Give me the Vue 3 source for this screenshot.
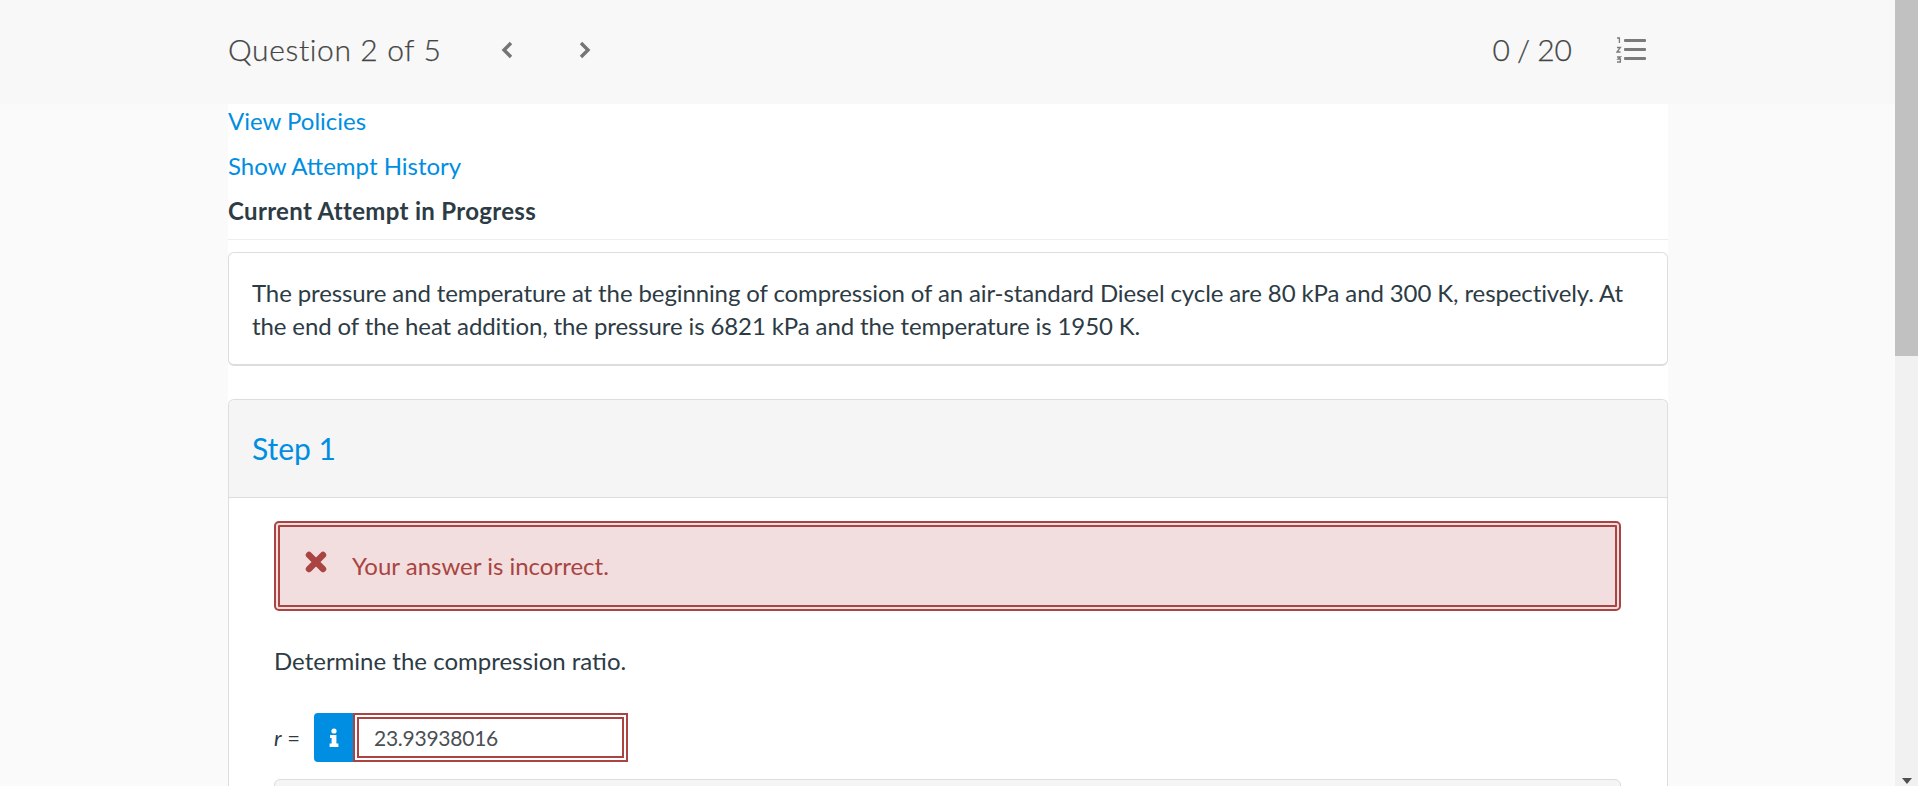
<script setup>
const question = { current: 2, total: 5, score: '0 / 20' }
const answer = '23.93938016'
</script>

<template>
  <div class="page">
    <div class="main">
      <header class="topbar">
        <div class="topbar-inner">
          <span class="q-title">Question {{ question.current }} of {{ question.total }}</span>
          <svg class="chev prev" width="14" height="20" viewBox="0 0 14 20">
            <path d="M11 3 L4 10 L11 17" fill="none" stroke="#757575" stroke-width="3.4" />
          </svg>
          <svg class="chev next" width="14" height="20" viewBox="0 0 14 20">
            <path d="M3 3 L10 10 L3 17" fill="none" stroke="#757575" stroke-width="3.4" />
          </svg>
          <span class="score">{{ question.score }}</span>
          <svg class="list-icon" width="30" height="26" viewBox="0 0 30 26">
            <g fill="none" stroke="#7b7b7b" stroke-width="1.3">
              <path d="M1 1 H3.4 V6" />
              <path d="M1 10.5 H4.4 L1 15 H4.6" />
              <path d="M1 20 H4.4 L2 22 H4.4 V25 H1" />
            </g>
            <g fill="#7b7b7b">
              <rect x="8" y="2" width="22" height="3" rx="1" />
              <rect x="8" y="11" width="22" height="3" rx="1" />
              <rect x="8" y="20" width="22" height="3" rx="1" />
            </g>
          </svg>
        </div>
      </header>

      <div class="content">
        <div class="meta">
          <a class="meta-row link">View Policies</a>
          <a class="meta-row link">Show Attempt History</a>
          <div class="meta-row strong">Current Attempt in Progress</div>
        </div>

        <section class="stem">
          The pressure and temperature at the beginning of compression of an air-standard Diesel cycle are 80 kPa and 300 K, respectively. At the end of the heat addition, the pressure is 6821 kPa and the temperature is 1950 K.
        </section>

        <section class="step">
          <div class="step-head">Step 1</div>
          <div class="step-body">
            <div class="alert">
              <svg class="x-icon" width="24" height="24" viewBox="0 0 24 24">
                <path d="M5 5 L19 19 M19 5 L5 19" stroke="#a94442" stroke-width="6.4" stroke-linecap="round" />
              </svg>
              <span>Your answer is incorrect.</span>
            </div>
            <p class="prompt">Determine the compression ratio.</p>
            <div class="answer-row">
              <span class="var"><i>r</i> =</span>
              <span class="info-btn">
                <svg width="12" height="20" viewBox="0 0 12 20">
                  <circle cx="6" cy="3" r="2.6" fill="#fff" />
                  <path d="M2 7 H8.4 V15.6 H10.4 V19 H1.6 V15.6 H3.6 V10 H2 Z" fill="#fff" />
                </svg>
              </span>
              <div class="answer-box">{{ answer }}</div>
            </div>
            <div class="next-panel"></div>
          </div>
        </section>
      </div>
    </div>

    <aside class="scrollbar">
      <div class="thumb"></div>
      <div class="arrow"></div>
    </aside>
  </div>
</template>

<style>
html, body {
  margin: 0;
  height: 100%;
  overflow: hidden;
}
</style>

<style scoped>
.page {
  display: flex;
  height: 786px;
  overflow: hidden;
  background: #fafafa;
  font-family: Lato, "Open Sans", sans-serif;
  font-size: 24px;
  color: #2d3b45;
}

.main {
  flex: 1;
  min-width: 0;
}

.topbar {
  height: 104px;
  background: #f8f8f8;
}

.topbar-inner {
  box-sizing: border-box;
  width: 1440px;
  height: 100%;
  margin-left: 228px;
  padding-bottom: 5px;
  display: flex;
  align-items: center;
  color: #454545;
}

.q-title {
  width: 272px;
  margin-top: -2px;
  font-size: 30px;
  font-weight: 300;
  letter-spacing: 0.63px;
  -webkit-text-stroke: 0.25px #454545;
}

.chev.next {
  margin-left: 64px;
}

.score {
  margin-left: auto;
  margin-top: -2px;
  font-size: 30px;
  font-weight: 300;
  word-spacing: -1px;
  -webkit-text-stroke: 0.25px #454545;
}

.list-icon {
  margin-left: 44px;
  margin-right: 22px;
}

.content {
  width: 1440px;
  margin-left: 228px;
  background: #fff;
  height: 682px;
  overflow: hidden;
}

.meta {
  border-bottom: 1px solid #eee;
  height: 135px;
  margin-bottom: 12px;
}

.meta-row {
  display: block;
  line-height: 34px;
  margin-bottom: 11px;
}

.link {
  color: #008ee2;
}

.strong {
  font-weight: 700;
  letter-spacing: 0.32px;
}

.stem {
  box-sizing: border-box;
  height: 114px;
  padding: 23px 23px;
  border: 1px solid #ddd;
  border-bottom-width: 2px;
  border-radius: 6px;
  line-height: 33px;
  letter-spacing: -0.11px;
  color: #2d3b45;
  margin-bottom: 33px;
}

.step {
  border: 1px solid #ddd;
  border-radius: 6px 6px 0 0;
  border-bottom: none;
  height: 400px;
}

.step-head {
  height: 98px;
  box-sizing: border-box;
  background: #f5f5f5;
  border-bottom: 1px solid #ddd;
  border-radius: 6px 6px 0 0;
  color: #008ee2;
  font-size: 30px;
  line-height: 96px;
  padding-left: 23px;
}

.step-body {
  padding: 23px 46px 0 45px;
}

.alert {
  box-sizing: border-box;
  height: 90px;
  display: flex;
  align-items: center;
  gap: 22px;
  padding-left: 24px;
  background: #f2dede;
  border: 6px double #a94442;
  border-radius: 5px;
  color: #a94442;
}

.alert span {
  margin-left: 2px;
  margin-top: -2px;
}

.x-icon {
  margin-top: -8px;
}

.prompt {
  margin: 0;
  padding-top: 33px;
  line-height: 34px;
}

.answer-row {
  display: flex;
  align-items: center;
  margin-top: 35px;
  height: 49px;
}

.var {
  width: 40px;
  font-size: 22px;
}

.info-btn {
  width: 39px;
  height: 49px;
  display: flex;
  align-items: center;
  justify-content: center;
  background: #008ee2;
  border-radius: 4px 0 0 4px;
}

.answer-box {
  box-sizing: border-box;
  width: 275px;
  height: 49px;
  border: 6px double #a94442;
  padding-left: 15px;
  line-height: 37px;
  font-size: 21px;
  letter-spacing: -0.25px;
  color: #4a4f54;
  background: #fff;
}

.next-panel {
  margin-top: 17px;
  height: 40px;
  background: #f5f5f5;
  border: 1px solid #ddd;
  border-radius: 6px 6px 0 0;
}

.scrollbar {
  position: relative;
  width: 23px;
  background: #f1f1f1;
  flex-shrink: 0;
}

.thumb {
  height: 356px;
  background: #c1c1c1;
}

.arrow {
  position: absolute;
  right: 6px;
  bottom: 2px;
  width: 0;
  height: 0;
  border-left: 5.5px solid transparent;
  border-right: 5.5px solid transparent;
  border-top: 6px solid #505050;
}
</style>
